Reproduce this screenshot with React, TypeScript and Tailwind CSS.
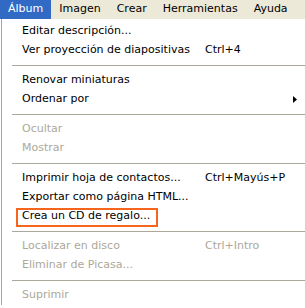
type Item =
    | { sep: true }
    | { sep?: false; label: string; shortcut?: string; disabled?: boolean; submenu?: boolean; marked?: boolean };

const menus = ['Álbum', 'Imagen', 'Crear', 'Herramientas', 'Ayuda'];

const items: Item[] = [
    { label: 'Editar descripción...' },
    { label: 'Ver proyección de diapositivas', shortcut: 'Ctrl+4' },
    { sep: true },
    { label: 'Renovar miniaturas' },
    { label: 'Ordenar por', submenu: true },
    { sep: true },
    { label: 'Ocultar', disabled: true },
    { label: 'Mostrar', disabled: true },
    { sep: true },
    { label: 'Imprimir hoja de contactos...', shortcut: 'Ctrl+Mayús+P' },
    { label: 'Exportar como página HTML...' },
    { label: 'Crea un CD de regalo...', marked: true },
    { sep: true },
    { label: 'Localizar en disco', shortcut: 'Ctrl+Intro', disabled: true },
    { label: 'Eliminar de Picasa...', disabled: true },
    { sep: true },
    { label: 'Suprimir', disabled: true },
];

export default function App() {
    return (
        <div className="w-[305px] h-[308px] overflow-hidden bg-white text-[11px] text-black font-['DejaVu_Sans',sans-serif]">
            <div className="flex h-[19px] bg-[#ECE9D8]">
                {menus.map((m, i) => (
                    <div
                        key={m}
                        className={`flex items-center px-[8px] ${i === 0 ? 'bg-[#316AC5] text-white' : ''}`}
                    >
                        {m}
                    </div>
                ))}
            </div>
            <div className="border-l border-[#ACA899] ml-px pt-[3px]">
                {items.map((it, i) =>
                    it.sep ? (
                        <div key={i} className="h-[11px] flex items-center pl-[10px]">
                            <div className="h-px w-full bg-[#ACA899]" />
                        </div>
                    ) : (
                        <div
                            key={i}
                            className={`relative flex items-center h-[19px] pl-[20px] ${it.disabled ? 'text-[#ACA899]' : ''}`}
                        >
                            <span className="w-[183px]">{it.label}</span>
                            {it.shortcut && <span>{it.shortcut}</span>}
                            {it.submenu && (
                                <svg className="absolute left-[291px] top-[6px]" width="4" height="7" viewBox="0 0 4 7">
                                    <path d="M0 0 L4 3.5 L0 7 Z" fill="#000" />
                                </svg>
                            )}
                            {it.marked && (
                                <div className="absolute left-[14px] top-[1px] w-[142px] h-[19px] border-2 border-[#F5651E]" />
                            )}
                        </div>
                    ),
                )}
            </div>
        </div>
    );
}
